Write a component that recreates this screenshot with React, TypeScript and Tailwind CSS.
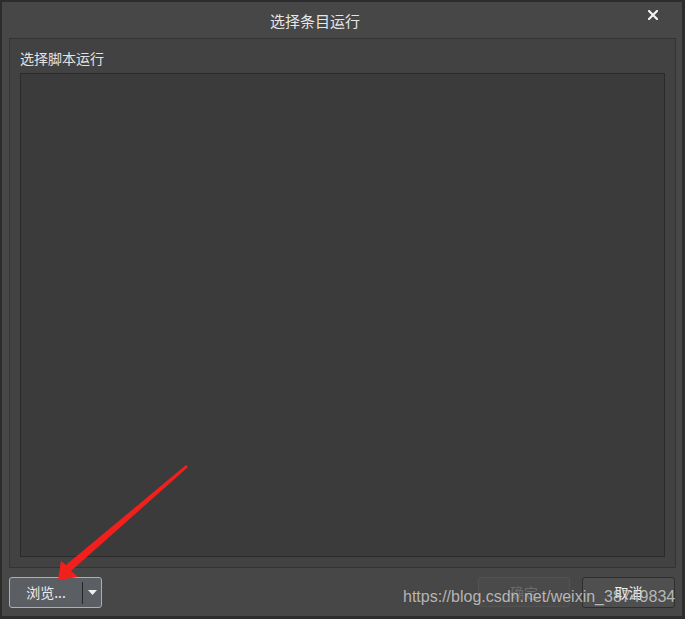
import React from "react";

const cjk = { fontFamily: '"Noto Sans CJK SC", "Noto Sans", sans-serif' };

function CloseIcon() {
  return (
    <svg width="10" height="10" viewBox="0 0 10 10" className="block">
      <path d="M1 1 L9 9 M9 1 L1 9" stroke="#f2f2f2" strokeWidth="2.2" strokeLinecap="square" />
    </svg>
  );
}

export default function App() {
  return (
    <div className="relative w-[685px] h-[619px] overflow-hidden bg-[#2b2b2b]" style={cjk}>
      <div className="flex flex-col w-full h-full bg-[#474747] border-l-2 border-t-2 border-r-[3px] border-b-[3px] border-[#2c2c2c]">
        {/* title bar */}
        <div className="relative h-[36px] shrink-0 flex items-center justify-center">
          <span className="text-[15px] leading-none text-[#e6e6e6] pr-[54px]">选择条目运行</span>
          <button className="absolute right-[24px] top-[8px] p-0">
            <CloseIcon />
          </button>
        </div>

        {/* main panel */}
        <div className="flex-1 flex flex-col ml-[7px] mr-[6px] border border-[#343434] bg-[#424242] px-[10px] pt-[9px] pb-[10px]">
          <div className="h-[21px] text-[14px] leading-[21px] text-[#e2e2e2] mb-[4px]">选择脚本运行</div>
          <div className="flex-1 border border-[#2a2a2a] bg-[#3b3b3b]" />
        </div>

        {/* button row */}
        <div className="h-[48px] shrink-0 flex items-start pt-[9px] pl-[7px] pr-[7px]">
          <div className="flex h-[31px] w-[93px] rounded-[3px] border border-[#8bb6e6] bg-[#5b5e62] items-center">
            <span className="w-[72px] text-center text-[14px] text-[#ececec]">浏览...</span>
            <span className="w-px h-[22px] bg-[#262626]" />
            <span className="flex-1 flex justify-center">
              <svg width="9" height="5" viewBox="0 0 9 5">
                <path d="M0 0 H9 L4.5 5 Z" fill="#f0f0f0" />
              </svg>
            </span>
          </div>
          <div className="flex-1" />
          <div className="flex h-[30px] w-[92px] items-center justify-center rounded-[3px] border border-[#535353] bg-[#4a4a4a] text-[14px] text-[#6c6c6c]">
            确定
          </div>
          <div className="ml-[12px] flex h-[31px] w-[93px] items-center justify-center rounded-[3px] border border-[#2e2e2e] bg-[#4f4f4f] text-[14px] text-[#f2f2f2]">
            取消
          </div>
        </div>
      </div>

      {/* watermark */}
      <div
        className="absolute left-[403px] top-[587px] text-[16px] leading-[20px] text-white/65 pointer-events-none"
        style={{ fontFamily: '"Liberation Sans", Arial, sans-serif', textShadow: "0 0 1px rgba(0,0,0,0.4)" }}
      >
        https://blog.csdn.net/weixin_38749834
      </div>

      {/* red annotation arrow */}
      <svg className="absolute left-0 top-0 pointer-events-none" width="685" height="619" viewBox="0 0 685 619">
        <polygon
          points="58,580 78,577 71,571 188,467 186,465 66,565 61,561"
          fill="#f2201c"
        />
      </svg>
    </div>
  );
}
